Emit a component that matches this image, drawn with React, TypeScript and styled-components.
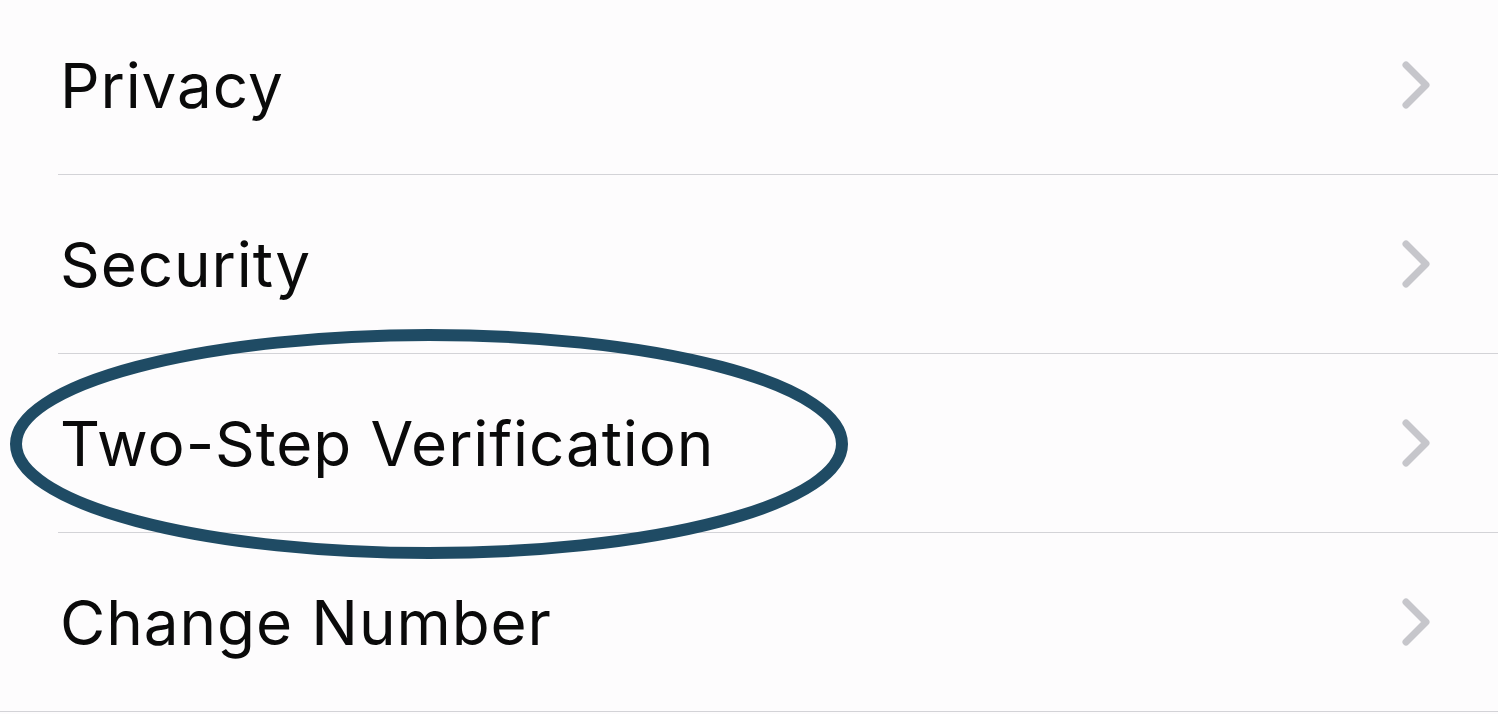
import React from 'react';
import styled, { createGlobalStyle } from 'styled-components';

const GlobalStyle = createGlobalStyle`
  html, body {
    margin: 0;
    padding: 0;
    background: #fdfcfd;
    overflow: hidden;
  }
`;

const items = ['Privacy', 'Security', 'Two-Step Verification', 'Change Number'];

function Chevron() {
  return (
    <svg width="34" height="54" viewBox="0 0 34 54" fill="none">
      <path
        d="M7 7 L27 27 L7 47"
        stroke="#c6c6cb"
        strokeWidth="7"
        strokeLinecap="round"
        strokeLinejoin="round"
      />
    </svg>
  );
}

function Highlight() {
  return (
    <Ring width="860" height="250" viewBox="0 0 860 250">
      <ellipse cx="429" cy="125" rx="413" ry="109" fill="none" stroke="#1f4b64" strokeWidth="12" />
    </Ring>
  );
}

export default function App() {
  return (
    <>
      <GlobalStyle />
      <List>
        {items.map((label, i) => (
          <React.Fragment key={label}>
            <Row>
              <Label>{label}</Label>
              <Chevron />
              {label === 'Two-Step Verification' && <Highlight />}
            </Row>
            <Divider $full={i === items.length - 1} />
          </React.Fragment>
        ))}
      </List>
    </>
  );
}

const List = styled.div`
  display: flex;
  flex-direction: column;
  margin-top: -4px;
  width: 1498px;
  background: #fdfcfd;
`;

const Row = styled.div`
  position: relative;
  height: 178px;
  display: flex;
  align-items: center;
  justify-content: space-between;
  padding: 0 65px 0 60px;
`;

const Divider = styled.div<{ $full: boolean }>`
  height: 1px;
  background: #d3d3d7;
  margin-left: ${({ $full }) => ($full ? '0' : '58px')};
`;

const Label = styled.span`
  font-family: Inter, 'Noto Sans', sans-serif;
  font-size: 62px;
  color: #0a0a0a;
  letter-spacing: 0.9px;
`;

const Ring = styled.svg`
  position: absolute;
  left: 0;
  top: -35px;
  pointer-events: none;
`;
